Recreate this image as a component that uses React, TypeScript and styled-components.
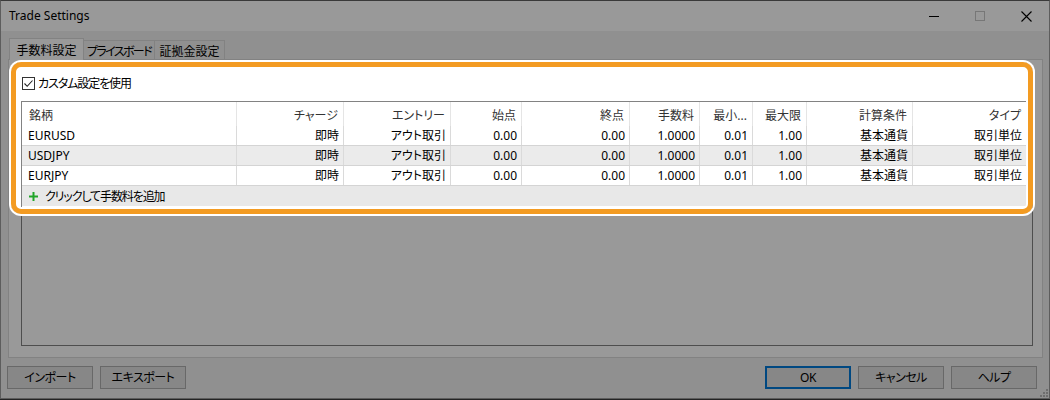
import React from "react";
import styled, { createGlobalStyle } from "styled-components";

const GlobalStyle = createGlobalStyle`
  html, body { margin: 0; padding: 0; background: #3c3c3c; }
  body {
    width: 1050px; height: 400px; overflow: hidden;
    font-family: "Noto Sans", "Noto Sans CJK JP", sans-serif;
    font-size: 12px; color: #000;
    font-feature-settings: "palt";
  }
  #root { width: 1050px; height: 400px; }
`;

const Window = styled.div`
  box-sizing: border-box;
  width: 1050px;
  height: 399px;
  border: 1px solid #9c9c9c;
  border-top-color: #606060;
  background: #f0f0f0;
  display: flex;
  flex-direction: column;
  position: relative;
`;

const TitleBar = styled.div`
  height: 30px;
  background: #fff;
  display: flex;
  align-items: center;
  padding-left: 8px;
`;

const Title = styled.div`
  flex: 1;
  font-size: 12px;
  line-height: 16px;
  padding-bottom: 1px;
`;

const CtrlButton = styled.div`
  width: 46px;
  height: 30px;
  display: flex;
  align-items: center;
  justify-content: center;
`;

const Body = styled.div`
  display: flex;
  flex-direction: column;
  padding: 0 6px 0 7px;
`;

const TabStrip = styled.div`
  height: 28px;
  display: flex;
  align-items: flex-end;
  padding-left: 1px;
`;

const Tab = styled.div<{ $active?: boolean; $w: number; $ls: number }>`
  box-sizing: border-box;
  width: ${(p) => p.$w}px;
  height: ${(p) => (p.$active ? 22 : 19)}px;
  margin-bottom: ${(p) => (p.$active ? -1 : 0)}px;
  margin-left: -1px;
  &:first-child { margin-left: 0; }
  border: 1px solid #d9d9d9;
  border-bottom: none;
  background: ${(p) => (p.$active ? "#fff" : "#f0f0f0")};
  position: relative;
  z-index: ${(p) => (p.$active ? 2 : 1)};
  display: flex;
  align-items: flex-start;
  justify-content: center;
  padding-top: ${(p) => (p.$active ? 4 : 3)}px;
  line-height: 16px;
  letter-spacing: ${(p) => p.$ls}px;
  white-space: nowrap;
  overflow: hidden;
`;

const TabPanel = styled.div`
  box-sizing: border-box;
  height: 299px;
  border: 1px solid #d9d9d9;
  background: #fff;
  position: relative;
  display: flex;
  flex-direction: column;
  padding: 17px 9px 11px 12px;
`;

const CheckRow = styled.div`
  display: flex;
  align-items: center;
  height: 13px;
  gap: 3px;
  margin-left: 1px;
  line-height: 16px;
`;

const KanaLabel = styled.span`
  letter-spacing: -1.1px;
`;

const CheckBox = styled.div`
  box-sizing: border-box;
  width: 13px;
  height: 13px;
  border: 1px solid #333;
  background: #fff;
  display: flex;
  align-items: center;
  justify-content: center;
`;

const ListView = styled.div`
  margin-top: 11px;
  flex: 1;
  border: 1px solid #828282;
  background: #fff;
  display: flex;
  flex-direction: column;
  overflow: hidden;
`;

const COLS = [215, 107, 107, 71, 108, 70, 53, 54, 106, 114];
const TOTAL = COLS.reduce((a, b) => a + b, 0);
const gridCols = COLS.map((c) => c + "px").join(" ");

const HeaderRow = styled.div`
  display: grid;
  grid-template-columns: ${gridCols};
  height: 24px;
`;

const HeaderCell = styled.div<{ $left?: boolean }>`
  box-sizing: border-box;
  border-right: 1px solid #e5e5e5;
  display: flex;
  align-items: center;
  justify-content: ${(p) => (p.$left ? "flex-start" : "flex-end")};
  padding-top: 3px;
  padding-left: ${(p) => (p.$left ? 7 : 0)}px;
  padding-right: ${(p) => (p.$left ? 0 : 5)}px;
  color: #333;
  line-height: 16px;
  white-space: nowrap;
  overflow: hidden;
`;

const DataRow = styled.div<{ $alt?: boolean }>`
  display: grid;
  grid-template-columns: ${gridCols};
  height: 20px;
  box-sizing: border-box;
  border-bottom: 1px solid #d4d4d4;
  background: ${(p) => (p.$alt ? "#ebebeb" : "#fff")};
  width: ${TOTAL}px;
`;

const DataCell = styled.div<{ $left?: boolean }>`
  box-sizing: border-box;
  border-right: 1px solid #dadada;
  display: flex;
  align-items: center;
  justify-content: ${(p) => (p.$left ? "flex-start" : "flex-end")};
  padding-top: 1px;
  padding-left: ${(p) => (p.$left ? 6 : 0)}px;
  padding-right: ${(p) => (p.$left ? 0 : 4)}px;
  line-height: 16px;
  white-space: nowrap;
`;

const AddRow = styled.div`
  width: ${TOTAL}px;
  height: 20px;
  flex: none;
  background: #e8e8e8;
  display: flex;
  align-items: center;
  padding-left: 7px;
  padding-top: 1px;
  gap: 7px;
  box-sizing: border-box;
  line-height: 16px;
`;

const Highlight = styled.div`
  position: absolute;
  left: 2px;
  top: 2px;
  width: 1022px;
  height: 152px;
  box-sizing: border-box;
  border: 5px solid #f39b22;
  border-radius: 10px;
  box-shadow: inset 0 0 0 2px #fff, 0 0 0 2px #fff, 0 0 0 3000px rgba(0, 0, 0, 0.4);
  z-index: 5;
  pointer-events: none;
`;

const Footer = styled.div`
  display: flex;
  align-items: flex-start;
  padding: 8px 12px 0 6px;
  gap: 7px;
`;

const Spacer = styled.div`
  flex: 1;
`;

const Button = styled.div<{ $default?: boolean }>`
  box-sizing: border-box;
  width: 86px;
  height: 23px;
  border: ${(p) => (p.$default ? "2px solid #0078d7" : "1px solid #adadad")};
  background: #e1e1e1;
  display: flex;
  align-items: center;
  justify-content: center;
  padding-top: 1px;
  line-height: 16px;
  white-space: nowrap;
  letter-spacing: -0.5px;
`;

const Grip = styled.svg`
  position: absolute;
  right: 1px;
  bottom: 1px;
`;

const headers = ["銘柄", "チャージ", "エントリー", "始点", "終点", "手数料", "最小...", "最大限", "計算条件", "タイプ"];
const rows = [
  ["EURUSD", "即時", "アウト取引", "0.00", "0.00", "1.0000", "0.01", "1.00", "基本通貨", "取引単位"],
  ["USDJPY", "即時", "アウト取引", "0.00", "0.00", "1.0000", "0.01", "1.00", "基本通貨", "取引単位"],
  ["EURJPY", "即時", "アウト取引", "0.00", "0.00", "1.0000", "0.01", "1.00", "基本通貨", "取引単位"],
];
const tabs = [
  { label: "手数料設定", w: 75, active: true, ls: 0 },
  { label: "プライスボード", w: 72, ls: -1.6 },
  { label: "証拠金設定", w: 71, ls: 0 },
];

export default function App() {
  return (
    <>
      <GlobalStyle />
      <Window>
        <TitleBar>
          <Title>Trade Settings</Title>
          <CtrlButton>
            <svg width="10" height="10" viewBox="0 0 10 10">
              <line x1="0" y1="5.5" x2="10" y2="5.5" stroke="#000" strokeWidth="1" />
            </svg>
          </CtrlButton>
          <CtrlButton>
            <svg width="10" height="10" viewBox="0 0 10 10">
              <rect x="0.5" y="0.5" width="9" height="9" fill="none" stroke="#c6c6c6" strokeWidth="1" />
            </svg>
          </CtrlButton>
          <CtrlButton>
            <svg width="11" height="11" viewBox="0 0 11 11">
              <path d="M0.5 0.5 L10.5 10.5 M10.5 0.5 L0.5 10.5" stroke="#000" strokeWidth="1.1" />
            </svg>
          </CtrlButton>
        </TitleBar>
        <Body>
          <TabStrip>
            {tabs.map((t) => (
              <Tab key={t.label} $active={t.active} $w={t.w} $ls={t.ls}>
                {t.label}
              </Tab>
            ))}
          </TabStrip>
          <TabPanel>
            <CheckRow>
              <CheckBox>
                <svg width="11" height="11" viewBox="0 0 11 11">
                  <path d="M1.5 5.5 L4.2 8.3 L9.5 2.5" fill="none" stroke="#222" strokeWidth="1.1" />
                </svg>
              </CheckBox>
              <KanaLabel>カスタム設定を使用</KanaLabel>
            </CheckRow>
            <ListView>
              <HeaderRow>
                {headers.map((h, i) => (
                  <HeaderCell key={h} $left={i === 0}>
                    {h}
                  </HeaderCell>
                ))}
              </HeaderRow>
              {rows.map((r, ri) => (
                <DataRow key={r[0]} $alt={ri === 1}>
                  {r.map((c, ci) => (
                    <DataCell key={ci} $left={ci === 0}>
                      {c}
                    </DataCell>
                  ))}
                </DataRow>
              ))}
              <AddRow>
                <svg width="9" height="9" viewBox="0 0 9 9">
                  <path d="M4.5 0 V9 M0 4.5 H9" stroke="#22a52a" strokeWidth="2" />
                </svg>
                <KanaLabel>クリックして手数料を追加</KanaLabel>
              </AddRow>
            </ListView>
            <Highlight />
          </TabPanel>
        </Body>
        <Footer>
          <Button>インポート</Button>
          <Button>エキスポート</Button>
          <Spacer />
          <Button $default>OK</Button>
          <Button>キャンセル</Button>
          <Button>ヘルプ</Button>
        </Footer>
        <Grip width="9" height="9" viewBox="0 0 9 9">
          {[
            [7, 1],
            [4, 4],
            [7, 4],
            [1, 7],
            [4, 7],
            [7, 7],
          ].map(([x, y]) => (
            <rect key={`${x}-${y}`} x={x} y={y} width="2" height="2" fill="#b8b8b8" />
          ))}
        </Grip>
      </Window>
    </>
  );
}
